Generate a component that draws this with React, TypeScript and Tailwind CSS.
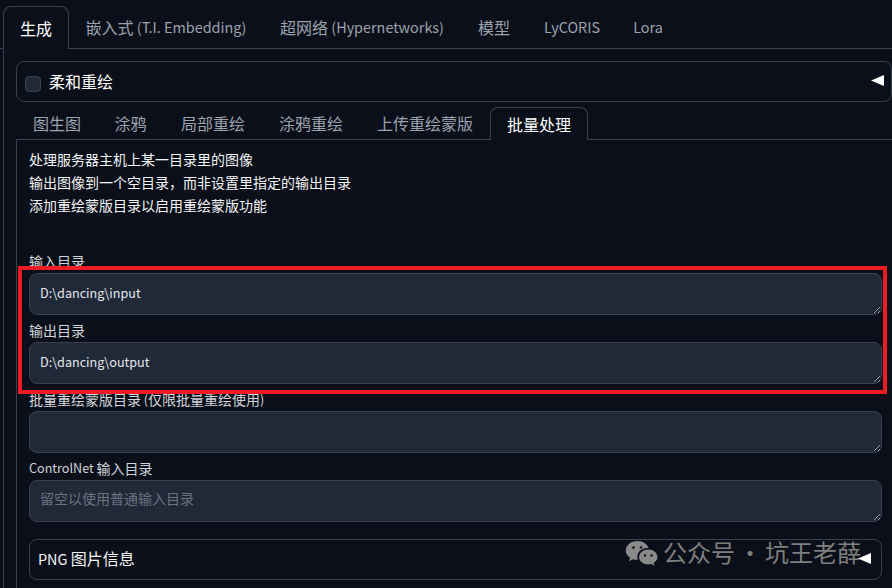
import React from "react";

const font = { fontFamily: '"Noto Sans CJK SC", "Noto Sans", sans-serif' };

function TopTab({ label, active, className = "" }: { label: React.ReactNode; active?: boolean; className?: string }) {
  return active ? (
    <div className={`h-[43px] rounded-t-lg border border-b-0 border-[#374151] bg-[#0b0f19] flex items-center justify-center text-white -mb-px ${className}`}>{label}</div>
  ) : (
    <div className={`h-[42px] flex items-center justify-center whitespace-pre text-[#9ca3af] ${className}`}>{label}</div>
  );
}

function Field({ label, value, placeholder }: { label: React.ReactNode; value?: string; placeholder?: string }) {
  return (
    <div className="flex flex-col">
      <div className="text-[14px] leading-[20px] text-[#d1d5db] flex items-end whitespace-pre pb-[2px] h-[27px]">{label}</div>
      <textarea
        readOnly
        value={value ?? ""}
        placeholder={placeholder}
        className={`w-[853px] h-[42px] rounded-lg border border-[#374151] bg-[#1f2937] px-[10px] text-[12.6px] leading-[20px] text-[#e5e7eb] placeholder:text-[14px] placeholder:text-[#6b7280] outline-none [color-scheme:dark] ${placeholder ? "pt-[7px] pb-[9px]" : "pt-[9px] pb-[7px]"}`}
      />
    </div>
  );
}

function L({ children }: { children: React.ReactNode }) {
  return <span className="text-[14.4px]">{children}</span>;
}

function S({ children }: { children: React.ReactNode }) {
  return <span className="text-[12.6px]">{children}</span>;
}

export default function App() {
  return (
    <div style={font} className="w-[892px] h-[588px] overflow-hidden bg-[#0b0f19] relative text-[16px]">
      <div className="flex pt-[6px] pl-[3px] border-b border-[#374151] h-[49px]">
        <TopTab label="生成" active className="w-[66px]" />
        <TopTab label={<>嵌入式<L> (T.I. Embedding)</L></>} className="w-[194px]" />
        <TopTab label={<>超网络<L> (Hypernetworks)</L></>} className="w-[198px]" />
        <TopTab label="模型" className="w-[66px]" />
        <TopTab label={<L>LyCORIS</L>} className="w-[90px]" />
        <TopTab label={<L>Lora</L>} className="w-[62px]" />
      </div>
      <div className="ml-[3px] border-l border-[#374151] pl-[12px] pt-[12px] h-[539px]">
        <div className="w-[876px] h-[41px] rounded-lg border border-[#374151] flex items-center pl-[8px] pr-[7px]">
          <div className="w-4 h-4 rounded-[4px] border border-[#374151] bg-[#1f2937] translate-y-[2px]" />
          <span className="ml-[8px] text-white -translate-y-[1px]">柔和重绘</span>
          <span className="ml-auto w-[13px] h-[11px] bg-white [clip-path:polygon(0_50%,100%_0,100%_100%)] -translate-y-[1px]" />
        </div>
        <div className="flex h-[38px] pt-[5px] border-b border-[#374151] w-[876px] pl-[1px]">
          <TopTab label="图生图" className="!h-[32px] w-[80px]" />
          <TopTab label="涂鸦" className="!h-[32px] w-[67px]" />
          <TopTab label="局部重绘" className="!h-[32px] w-[98px]" />
          <TopTab label="涂鸦重绘" className="!h-[32px] w-[98px]" />
          <TopTab label="上传重绘蒙版" className="!h-[32px] w-[130px]" />
          <TopTab label="批量处理" active className="!h-[33px] w-[98px]" />
        </div>
        <div className="border-l border-[#374151] pl-[12px] h-[450px]">
          <div className="pt-[8px] text-[14px] leading-[23px] text-[#f3f4f6] h-[106px]">
            <p>处理服务器主机上某一目录里的图像</p>
            <p>输出图像到一个空目录，而非设置里指定的输出目录</p>
            <p>添加重绘蒙版目录以启用重绘蒙版功能</p>
          </div>
          <Field label="输入目录" value={"D:\\dancing\\input"} />
          <Field label="输出目录" value={"D:\\dancing\\output"} />
          <Field label={<>批量重绘蒙版目录<S> (</S>仅限批量重绘使用<S>)</S></>} />
          <Field label={<><S>ControlNet </S>输入目录</>} placeholder="留空以使用普通输入目录" />
          <div className="mt-[17px] w-[853px] h-[41px] rounded-lg border border-[#374151] flex items-center px-[8px] text-[#f3f4f6]">
            <span className="-translate-y-[2px] whitespace-pre"><L>PNG </L>图片信息</span>
          </div>
        </div>
      </div>

      {/* red annotation */}
      <div className="absolute left-[18px] top-[266px] w-[869px] h-[128px] border-4 border-[#ed1c24]" />

      {/* watermark */}
      <div className="absolute left-[625px] top-[537px] flex items-center text-[24px] leading-[30px] text-[#7f7f7f]">
        <svg width="33" height="27" viewBox="0 0 33 27" className="mr-[5px] translate-y-[1px]">
          <path d="M12.5 1C6 1 .8 5.2.8 10.500c0 3 1.600 5.600 4.200 7.300l-1 3.400 3.900-2c1.200.4 2.600.6 4 .6h1c-.4-1-.6-2-.6-3 0-5 4.600-8.800 10.400-8.800h.9C22.500 4.300 18 1 12.500 1z" fill="#8a8a8a" />
          <path d="M23.300 9.500c-5 0-9.200 3.300-9.200 7.500s4.200 7.500 9.200 7.500c1 0 2-.2 3-.5l3.200 1.800-.8-3c2.400-1.400 3.800-3.500 3.800-5.800 0-4.200-4.200-7.500-9.200-7.500z" fill="#8a8a8a" />
          <circle cx="8.500" cy="7.500" r="1.300" fill="#0b0f19" />
          <circle cx="16" cy="7.500" r="1.300" fill="#0b0f19" />
          <circle cx="20" cy="15.500" r="1.200" fill="#0b0f19" />
          <circle cx="26.500" cy="15.500" r="1.200" fill="#0b0f19" />
        </svg>
        <span>公众号</span>
        <span className="w-[30px] text-center">·</span>
        <span>坑王老薛</span>
      </div>

      {/* accordion arrow over watermark */}
      <span className="absolute left-[858px] top-[553px] w-[13px] h-[11px] bg-white [clip-path:polygon(0_50%,100%_0,100%_100%)]" />
    </div>
  );
}
